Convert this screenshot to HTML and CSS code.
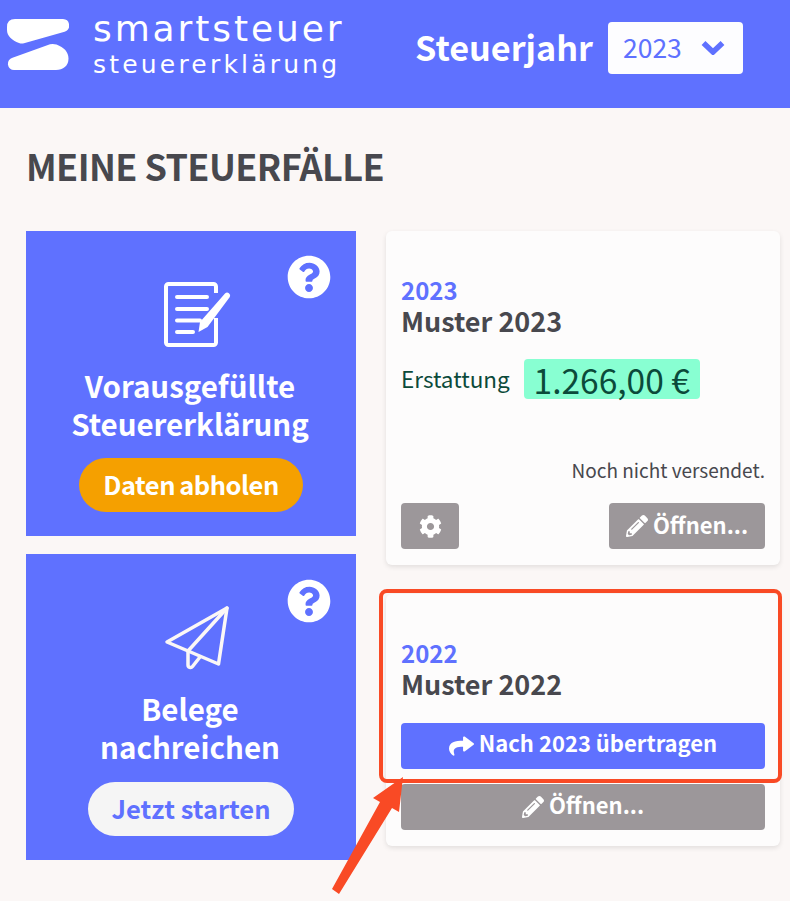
FILE: index.html
```html
<!DOCTYPE html>
<html lang="de">
<head>
<meta charset="utf-8">
<title>Meine Steuerfälle</title>
<link rel="stylesheet" href="styles.css">
</head>
<body>
<div class="page">
  <header class="topbar">
    <div class="brand">
      <svg class="brand-mark" viewBox="0 0 62 52" width="62" height="52"><path d="M8 0H56a6.5 6.5 0 0 1 1.6 12.7L17 24.2q-2.500.7-5-.2C5 21.500 0 17 0 11V8Q0 0 8 0Z"/><path d="M43 25.300q3-.9 6.500.3C57 28.500 61.500 33 61.500 39.500C61.500 47 56 51 49 51H7a6.200 6.200 0 0 1-1.500-12.200Z"/></svg>
      <div class="brand-text">
        <div class="brand-main">smartsteuer</div>
        <div class="brand-sub">steuererklärung</div>
      </div>
    </div>
    <div class="year-picker">
      <span class="year-label">Steuerjahr</span>
      <div class="year-select">
        <span class="year-value">2023</span>
        <svg class="chevron" viewBox="0 0 24 15" width="24" height="15"><path d="M2.500 3L12 12L21.500 3"/></svg>
      </div>
    </div>
  </header>

  <main class="content">
    <h1 class="title">MEINE STEUERFÄLLE</h1>
    <div class="columns">
      <div class="actions">
        <section class="action action-first">
          <svg class="help" viewBox="0 0 512 512"><path d="M504 256c0 136.997-111.043 248-248 248S8 392.997 8 256C8 119.083 119.043 8 256 8s248 111.083 248 248zM262.655 90c-54.497 0-89.255 22.957-116.549 63.758-3.536 5.286-2.353 12.415 2.715 16.258l34.699 26.31c5.205 3.947 12.621 3.008 16.665-2.122 17.864-22.658 30.113-35.797 57.303-35.797 20.429 0 45.698 13.148 45.698 32.958 0 14.976-12.363 22.667-32.534 33.976C247.128 238.528 216 254.941 216 296v4c0 6.627 5.373 12 12 12h56c6.627 0 12-5.373 12-12v-1.333c0-28.462 83.186-29.647 83.186-106.667 0-58.002-60.165-102-116.531-102zM256 338c-25.365 0-46 20.635-46 46 0 25.364 20.635 46 46 46s46-20.636 46-46c0-25.365-20.635-46-46-46z"/></svg>
          <svg class="action-icon" viewBox="0 0 68 67" width="68" height="67">
            <path class="doc" d="M52 37V61.500a2.500 2.500 0 0 1-2.500 2.500H4.500a2.500 2.500 0 0 1-2.500-2.500V5.500a2.500 2.500 0 0 1 2.500-2.500H49.500a2.500 2.500 0 0 1 2.500 2.500V12"/>
            <path class="doc-line" d="M13 16H43M13 28H43M13 39.500H36M13 51H29"/>
            <path class="doc-pen" d="M61 12.500a3 3 0 0 1 4.800 3.500L43.500 46L34.500 51L36 41Z"/>
          </svg>
          <h2 class="action-title">Vorausgefüllte<br>Steuererklärung</h2>
          <div class="pill pill-orange">Daten abholen</div>
        </section>
        <section class="action action-second">
          <svg class="help" viewBox="0 0 512 512"><path d="M504 256c0 136.997-111.043 248-248 248S8 392.997 8 256C8 119.083 119.043 8 256 8s248 111.083 248 248zM262.655 90c-54.497 0-89.255 22.957-116.549 63.758-3.536 5.286-2.353 12.415 2.715 16.258l34.699 26.31c5.205 3.947 12.621 3.008 16.665-2.122 17.864-22.658 30.113-35.797 57.303-35.797 20.429 0 45.698 13.148 45.698 32.958 0 14.976-12.363 22.667-32.534 33.976C247.128 238.528 216 254.941 216 296v4c0 6.627 5.373 12 12 12h56c6.627 0 12-5.373 12-12v-1.333c0-28.462 83.186-29.647 83.186-106.667 0-58.002-60.165-102-116.531-102zM256 338c-25.365 0-46 20.635-46 46 0 25.364 20.635 46 46 46s46-20.636 46-46c0-25.365-20.635-46-46-46z"/></svg>
          <svg class="action-icon" viewBox="0 0 68 67" width="68" height="67">
            <path class="plane" d="M63 4L3 38L54.500 60Z"/>
            <path class="plane" d="M63 4L24 47V61a2.500 2.500 0 0 0 4.500 1.500L36 53"/>
          </svg>
          <h2 class="action-title">Belege<br>nachreichen</h2>
          <div class="pill pill-light">Jetzt starten</div>
        </section>
      </div>

      <div class="cases">
        <article class="case case-current">
          <div class="case-year">2023</div>
          <div class="case-name">Muster 2023</div>
          <div class="refund">
            <span class="refund-label">Erstattung</span>
            <span class="refund-value">1.266,00 €</span>
          </div>
          <div class="case-status">Noch nicht versendet.</div>
          <div class="case-buttons">
            <div class="btn btn-grey btn-square">
              <svg class="ico-cog" viewBox="0 0 512 512"><path d="M487.4 315.7l-42.6-24.6c4.3-23.2 4.3-47 0-70.2l42.6-24.6c4.9-2.8 7.1-8.6 5.500-14-11.1-35.6-30-67.8-54.7-94.6-3.8-4.1-10-5.1-14.8-2.3L380.8 110c-17.9-15.4-38.5-27.3-60.8-35.1V25.8c0-5.6-3.9-10.500-9.4-11.7-36.7-8.2-74.3-7.8-109.2 0-5.500 1.2-9.4 6.1-9.4 11.7V75c-22.2 7.9-42.8 19.8-60.8 35.1L88.7 85.500c-4.9-2.8-11-1.9-14.8 2.3-24.7 26.7-43.6 58.9-54.7 94.6-1.7 5.400.6 11.2 5.500 14L67.3 221c-4.3 23.2-4.3 47 0 70.2l-42.6 24.6c-4.9 2.8-7.1 8.6-5.500 14 11.1 35.6 30 67.8 54.7 94.6 3.8 4.1 10 5.1 14.8 2.3l42.6-24.6c17.9 15.4 38.5 27.3 60.8 35.1v49.2c0 5.6 3.9 10.500 9.4 11.7 36.7 8.2 74.3 7.8 109.2 0 5.500-1.2 9.4-6.1 9.4-11.7v-49.2c22.2-7.9 42.8-19.8 60.8-35.1l42.6 24.6c4.9 2.8 11 1.9 14.8-2.3 24.7-26.7 43.6-58.9 54.7-94.6 1.500-5.500-.7-11.3-5.6-14.1zM256 336c-44.1 0-80-35.9-80-80s35.9-80 80-80 80 35.9 80 80-35.9 80-80 80z"/></svg>
            </div>
            <div class="btn btn-grey btn-open">
              <svg class="ico" viewBox="0 0 512 512"><path d="M497.9 142.1l-46.1 46.1c-4.7 4.7-12.3 4.7-17 0l-111-111c-4.7-4.7-4.7-12.3 0-17l46.1-46.1c18.7-18.7 49.1-18.7 67.9 0l60.1 60.1c18.8 18.7 18.8 49.1 0 67.9zM284.2 99.8L21.6 362.4.4 483.9c-2.9 16.4 11.4 30.6 27.8 27.8l121.5-21.3 262.6-262.6c4.7-4.7 4.7-12.3 0-17l-111-111c-4.8-4.7-12.4-4.7-17.1 0zM124.1 339.9c-5.500-5.500-5.500-14.3 0-19.8l154-154c5.500-5.500 14.3-5.500 19.8 0s5.500 14.3 0 19.8l-154 154c-5.500 5.500-14.3 5.500-19.8 0zM88 424h48v36.3l-64.5 11.3-31.1-31.1L51.7 376H88v48z"/></svg>
              <span class="btn-text">Öffnen...</span>
            </div>
          </div>
        </article>
        <article class="case case-previous">
          <div class="case-year">2022</div>
          <div class="case-name">Muster 2022</div>
          <div class="btn btn-blue btn-wide">
            <svg class="ico ico-share" viewBox="0 0 512 512" preserveAspectRatio="none"><path d="M503.691 189.836L327.687 37.851C312.281 24.546 288 35.347 288 56.015v80.053C127.371 137.907 0 170.1 0 322.326c0 61.441 39.581 122.309 83.333 154.132 13.654 9.931 33.114-2.533 28.079-18.631C66.066 312.814 132.917 274.316 288 272.085V360c0 20.7 24.3 31.453 39.687 18.164l176.004-152c11.071-9.562 11.086-26.753 0-36.328z"/></svg>
            <span class="btn-text btn-text-high">Nach 2023 übertragen</span>
          </div>
          <div class="btn btn-grey btn-wide">
            <svg class="ico" viewBox="0 0 512 512"><path d="M497.9 142.1l-46.1 46.1c-4.7 4.7-12.3 4.7-17 0l-111-111c-4.7-4.7-4.7-12.3 0-17l46.1-46.1c18.7-18.7 49.1-18.7 67.9 0l60.1 60.1c18.8 18.7 18.8 49.1 0 67.9zM284.2 99.8L21.6 362.4.4 483.9c-2.9 16.4 11.4 30.6 27.8 27.8l121.5-21.3 262.6-262.6c4.7-4.7 4.7-12.3 0-17l-111-111c-4.8-4.7-12.4-4.7-17.1 0zM124.1 339.9c-5.500-5.500-5.500-14.3 0-19.8l154-154c5.500-5.500 14.3-5.500 19.8 0s5.500 14.3 0 19.8l-154 154c-5.500 5.500-14.3 5.500-19.8 0zM88 424h48v36.3l-64.5 11.3-31.1-31.1L51.7 376H88v48z"/></svg>
            <span class="btn-text btn-text-mid">Öffnen...</span>
          </div>
        </article>
      </div>
    </div>
  </main>

  <div class="callout"></div>
  <svg class="callout-arrow" viewBox="0 0 790 901" width="790" height="901"><path d="M403 777L373 798L380 802L332 889L339 894L392 808L399 812Z"/></svg>
</div>
</body>
</html>
```
FILE: styles.css
```css
* { box-sizing: border-box; }
html, body { margin: 0; padding: 0; }
body {
  font-family: "Noto Sans CJK SC", "Noto Sans", sans-serif;
  background: #fbf7f6;
  color: #48484e;
}
.page { position: relative; width: 790px; height: 901px; overflow: hidden; }

.topbar {
  height: 108px;
  background: #5f71ff;
  display: flex;
  padding: 14px 47px 0 7px;
  justify-content: space-between;
  color: #fff;
}
.brand { display: flex; gap: 24px; align-items: flex-start; padding-top: 5px; }
.brand-mark { fill: #fff; }
.brand-text { font-family: "DejaVu Sans", sans-serif; font-weight: 400; color: #fff; margin-top: -12px; }
.brand-main { font-size: 36px; line-height: 44px; letter-spacing: 2.900px; }
.brand-sub { font-size: 25px; line-height: 27px; letter-spacing: 3.200px; }

.year-picker { display: flex; align-items: center; gap: 15px; height: 68px; }
.year-label { font-size: 34.200px; font-weight: 700; padding-bottom: 4px; }
.year-select {
  width: 135px;
  height: 52px;
  background: #fdfdff;
  border-radius: 4px;
  color: #5f71ff;
  font-size: 26.500px;
  display: flex;
  align-items: center;
  justify-content: space-between;
  padding: 0 18px 0 15px;
}
.year-value { padding-bottom: 4px; }
.chevron { fill: none; stroke: #5f71ff; stroke-width: 5.500; margin-bottom: 1px; }

.content { padding: 0 10px 0 26px; }
.title { margin: 34px 0 43px; font-size: 36px; line-height: 46px; font-weight: 700; letter-spacing: -.6px; color: #48484e; }
.columns { display: grid; grid-template-columns: 330px 394px; column-gap: 30px; align-items: start; }

.actions { display: flex; flex-direction: column; gap: 18px; }
.action {
  position: relative;
  background: #5f71ff;
  color: #fff;
  display: flex;
  flex-direction: column;
  align-items: center;
  padding-top: 50px;
}
.action-first { height: 305px; }
.action-second { height: 306px; }
.help { position: absolute; top: 24px; right: 25px; width: 44px; height: 44px; fill: #fff; }
.action-second .help { top: 25px; }
.action-icon { display: block; margin-left: 14px; }
.doc { fill: none; stroke: #fff; stroke-width: 4; stroke-linejoin: round; }
.doc-line { fill: none; stroke: #fff; stroke-width: 4; stroke-linecap: round; }
.doc-pen { fill: #fff; }
.plane { fill: none; stroke: #fbf7f6; stroke-width: 3.500; stroke-linejoin: round; stroke-linecap: round; }
.action-title { margin: 18px 0 16px; padding-right: 2px; font-size: 29.500px; line-height: 38px; font-weight: 700; text-align: center; }
.pill {
  height: 54px;
  border-radius: 27px;
  display: flex;
  align-items: center;
  justify-content: center;
  padding-bottom: 3px;
  font-size: 25.500px;
  font-weight: 700;
}
.pill-orange { width: 224px; background: #f5a000; color: #fff; letter-spacing: -.5px; word-spacing: -1px; }
.pill-light { width: 206px; background: #f5f5f5; color: #5f71ff; margin-top: 1px; }

.cases { display: flex; flex-direction: column; gap: 29px; }
.case {
  background: #fdfcfc;
  border-radius: 6px;
  box-shadow: 0 2px 5px rgba(0, 0, 0, .1);
  padding: 44px 15px 16px;
}
.case-current { height: 334px; }
.case-previous { height: 252px; }
.case-year { color: #5f71ff; font-size: 24px; line-height: 30px; font-weight: 700; }
.case-name { font-size: 27px; line-height: 32px; font-weight: 700; color: #48484e; }
.refund { display: flex; align-items: center; gap: 14px; margin-top: 22px; }
.refund-label { font-size: 22.500px; color: #0b4a3a; padding-bottom: 2px; }
.refund-value {
  background: #88ffd2;
  border-radius: 4px;
  color: #0b4a3a;
  font-size: 33.500px;
  width: 176px;
  height: 40px;
  display: flex;
  align-items: center;
  justify-content: center;
}
.case-status { margin-top: 59px; text-align: right; font-size: 19px; line-height: 24px; color: #48484e; }
.case-buttons { display: flex; justify-content: space-between; margin-top: 21px; }
.btn {
  height: 46px;
  border-radius: 4px;
  color: #fff;
  display: flex;
  align-items: center;
  justify-content: center;
  gap: 5px;
  font-size: 22px;
  font-weight: 700;
}
.btn-text { padding-bottom: 4px; }
.btn-text-high { padding-bottom: 8px; }
.btn-text-mid { padding-bottom: 6px; }
.btn-grey { background: #9c979a; }
.btn-blue { background: #5f71ff; }
.btn-square { width: 58px; }
.btn-open { width: 156px; }
.btn-wide { width: 364px; }
.case-previous .btn-blue { margin-top: 23px; }
.case-previous .btn-grey { margin-top: 15px; }
.ico { width: 22px; height: 22px; fill: #fff; }
.ico-share { width: 25px; height: 22px; }
.ico-cog { width: 23px; height: 23px; fill: #fff; }

.callout {
  position: absolute;
  left: 379px;
  top: 589px;
  width: 403px;
  height: 194px;
  border: 4px solid #f94a25;
  border-radius: 8px;
}
.callout-arrow { position: absolute; left: 0; top: 0; fill: #f94a25; }
```
